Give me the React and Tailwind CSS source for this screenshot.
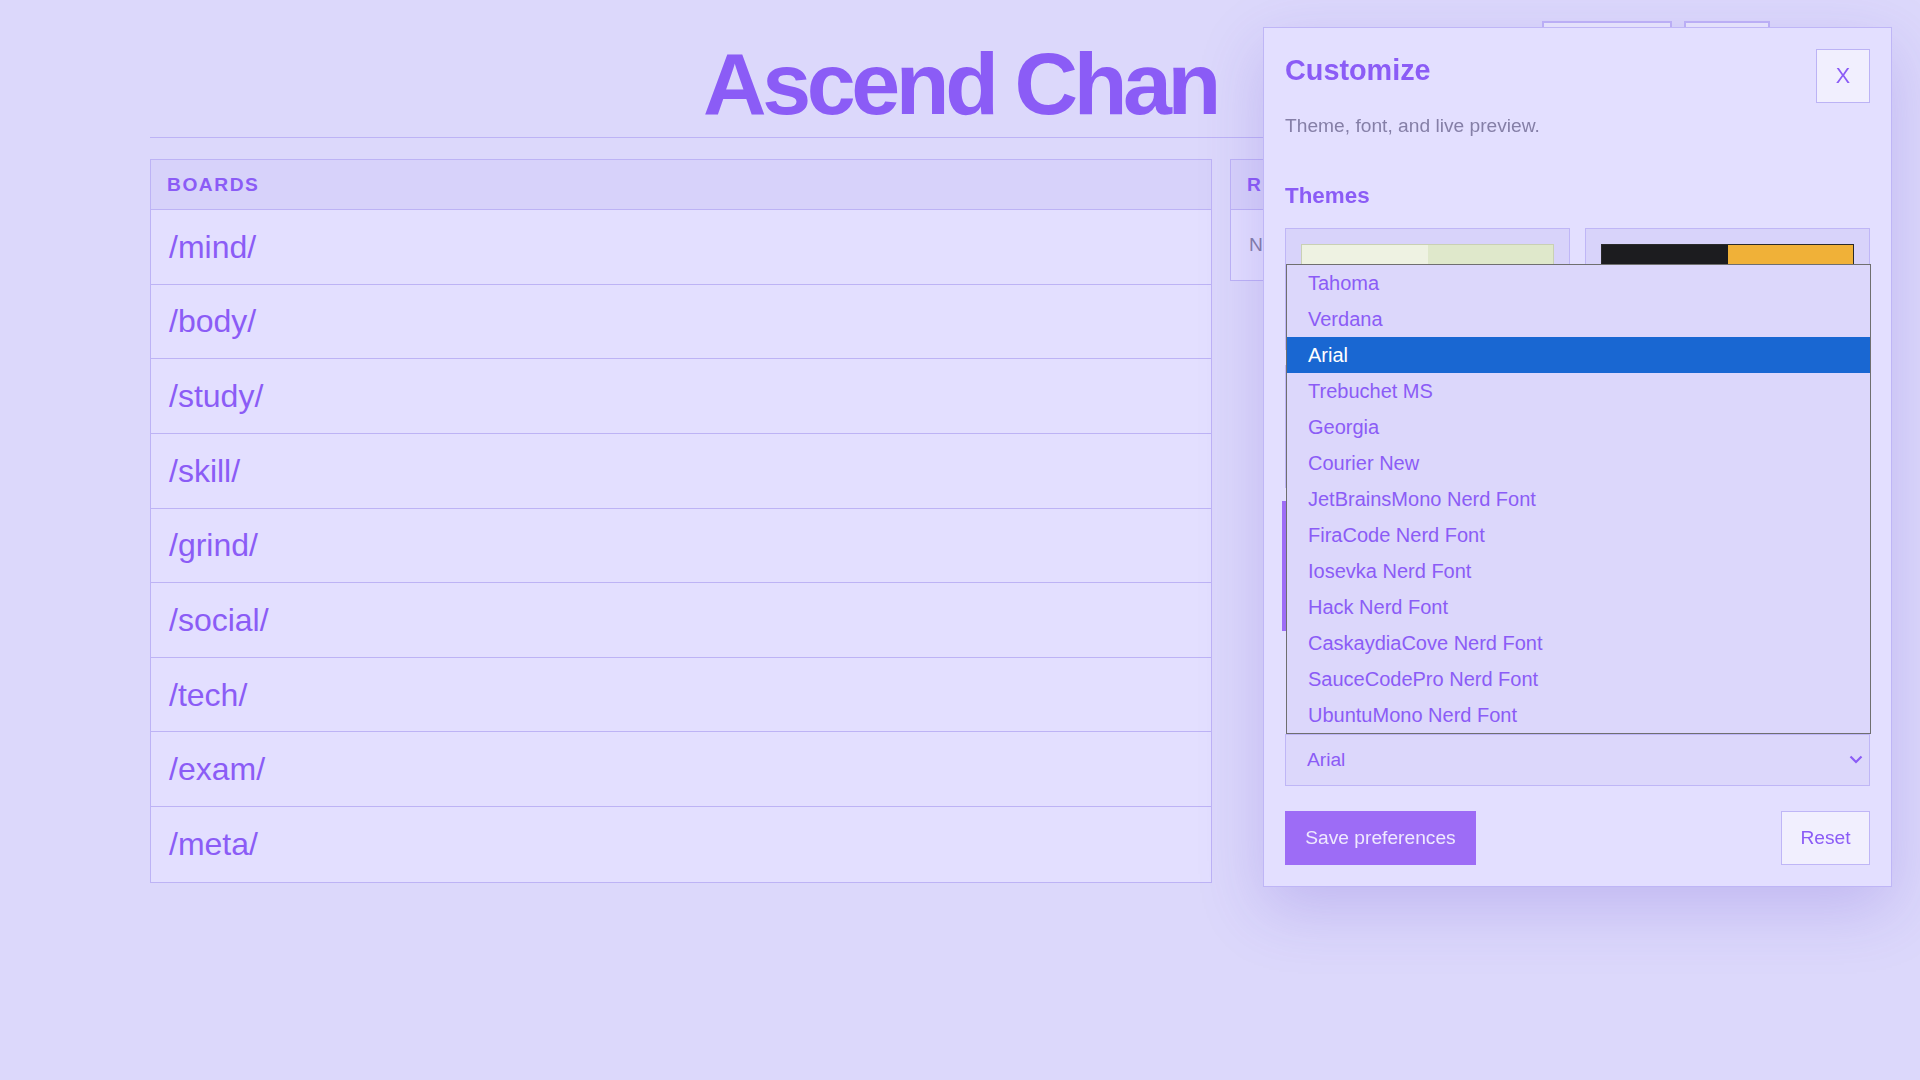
import React from "react";

const boards = ["/mind/", "/body/", "/study/", "/skill/", "/grind/", "/social/", "/tech/", "/exam/", "/meta/"];

const fonts = [
  "Tahoma",
  "Verdana",
  "Arial",
  "Trebuchet MS",
  "Georgia",
  "Courier New",
  "JetBrainsMono Nerd Font",
  "FiraCode Nerd Font",
  "Iosevka Nerd Font",
  "Hack Nerd Font",
  "CaskaydiaCove Nerd Font",
  "SauceCodePro Nerd Font",
  "UbuntuMono Nerd Font",
];

const themes = [
  { name: "Matcha", a: "bg-[#eef2e2]", b: "bg-[#dfe8cb]", border: "border-[#c9d0b4]" },
  { name: "Bumblebee", a: "bg-[#1c1c1f]", b: "bg-[#f0b138]", border: "border-[#2a2a2a]" },
  { name: "Lavender", a: "bg-[#e3dfff]", b: "bg-[#8b5cf6]", border: "border-[#bdb3f5]" },
  { name: "Midnight", a: "bg-[#111827]", b: "bg-[#60a5fa]", border: "border-[#1f2937]" },
];

export default function App() {
  return (
    <div className="min-h-screen bg-[#dcd8fb] font-['Liberation_Sans',Arial,sans-serif] text-[#8b5cf6]">
      <div className="mx-auto w-[1620px]">
        <header className="relative border-b border-[#bdb3f5] pt-[40px] pb-[9px] text-center">
          <h1 className="text-[88px] leading-[88px] font-bold tracking-[-0.05em] text-[#8b5cf6]">Ascend Chan</h1>
          <div className="absolute right-0 top-[21px] flex gap-[12px]">
            <button className="h-[40px] w-[130px] border-2 border-[#bfb3f7] bg-[#ebe8fd] text-[19.2px] text-[#8b5cf6]">Customize</button>
            <button className="h-[40px] w-[86px] border-2 border-[#bfb3f7] bg-[#ebe8fd] text-[19.2px] text-[#8b5cf6]">Login</button>
          </div>
        </header>

        <main className="mt-[21px] grid grid-cols-[1fr_540px] items-start gap-[18px]">
          <section className="border border-[#bdb3f5] bg-[#e3dfff]">
            <div className="flex h-[50px] items-center border-b border-[#bdb3f5] bg-[#d7d2fa] px-[16px] pt-[2px] text-[19.2px] font-bold uppercase tracking-[0.08em] text-[#8b5cf6]">
              Boards
            </div>
            {boards.map((b, i) => (
              <div
                key={b}
                className={
                  "flex h-[74.65px] items-center px-[18px] text-[32px] text-[#8b5cf6] " +
                  (i < boards.length - 1 ? "border-b border-[#bdb3f5]" : "")
                }
              >
                {b}
              </div>
            ))}
          </section>

          <section className="border border-[#bdb3f5] bg-[#e3dfff]">
            <div className="flex h-[50px] items-center border-b border-[#bdb3f5] bg-[#d7d2fa] px-[16px] pt-[2px] text-[19.2px] font-bold uppercase tracking-[0.08em] text-[#8b5cf6]">
              Recent
            </div>
            <div className="flex h-[70px] items-center px-[18px] text-[19.2px] text-[#857fa7]">No threads yet.</div>
          </section>
        </main>
      </div>

      <div className="fixed left-[1263px] top-[27px] w-[629px] border border-[#bfb6f6] bg-[#e3dfff] p-[21px] shadow-[0_22px_60px_rgba(96,70,210,0.22)]">
        <div className="flex items-start justify-between">
          <h2 className="text-[28.8px] font-bold leading-[42px] text-[#8b5cf6]">Customize</h2>
          <button className="flex h-[54px] w-[54px] items-center justify-center border border-[#bcb3f5] bg-[#f1effe] text-[21.6px] text-[#8b5cf6]">
            X
          </button>
        </div>
        <p className="mt-[9px] text-[19.2px] leading-[28.8px] text-[#857fa7]">Theme, font, and live preview.</p>

        <h3 className="mt-[38.6px] text-[22.4px] font-bold leading-[33.6px] text-[#8b5cf6]">Themes</h3>
        <div className="mt-[15px] grid grid-cols-2 gap-[15px]">
          {themes.map((t) => (
            <div key={t.name} title={t.name} className="h-[122.5px] border border-[#bfb6f6] bg-[#d8d3fa] px-[15px] pt-[15px]">
              <div className={"flex h-[40px] border " + t.border}>
                <div className={"flex-1 " + t.a} />
                <div className={"flex-1 " + t.b} />
              </div>
            </div>
          ))}
        </div>

        <div className="-ml-[3px] mt-[13px] h-[130px] border-l-4 border-[#9d6cf6] bg-[#dcd7fb]" />

        <div className="mb-[33.4px] mt-[36px] h-[33.6px]" />

        <div className="relative">
          <div className="flex h-[52px] items-center justify-between border border-[#bfb6f6] bg-[#dcd7fb] pl-[21px] pr-[6px] text-[19.2px] text-[#8b5cf6]">
            <span>Arial</span>
            <svg width="14" height="9" viewBox="0 0 14 9" className="text-[#8b5cf6]">
              <path d="M1.5 1.5 L7 7 L12.5 1.5" fill="none" stroke="currentColor" strokeWidth="2.2" />
            </svg>
          </div>
          <div className="absolute bottom-full left-[1px] right-[-1px] border border-[#6f6f6f] bg-[#dcd7fb]">
            {fonts.map((f) => (
              <div
                key={f}
                className={
                  "flex h-[36px] items-center px-[21px] text-[20px] " +
                  (f === "Arial" ? "bg-[#1967d2] text-white" : "text-[#8b5cf6]")
                }
              >
                {f}
              </div>
            ))}
          </div>
        </div>

        <div className="mt-[25px] flex items-center justify-between">
          <button className="flex h-[54px] w-[191px] items-center justify-center bg-[#9d6cf6] text-[19.2px] text-[#efe9fe]">
            Save preferences
          </button>
          <button className="flex h-[54px] w-[89px] items-center justify-center border border-[#bfb6f6] bg-[#f1effe] text-[19.2px] text-[#8b5cf6]">
            Reset
          </button>
        </div>
      </div>
    </div>
  );
}
